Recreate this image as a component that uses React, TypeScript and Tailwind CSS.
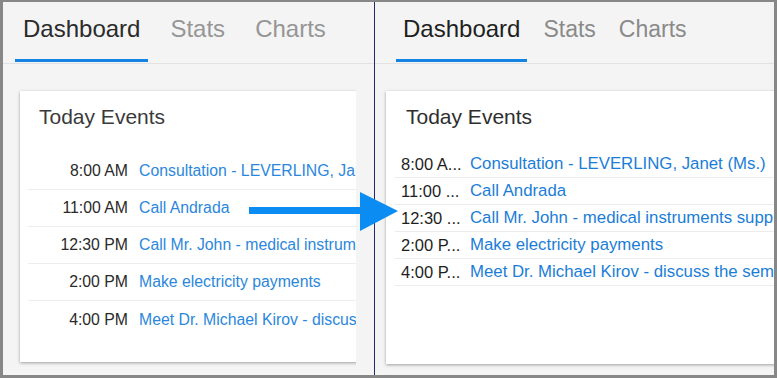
import React from "react";

const events = [
  { time: "8:00 AM", short: "8:00 A...", title: "Consultation - LEVERLING, Janet (Ms.)" },
  { time: "11:00 AM", short: "11:00 ...", title: "Call Andrada" },
  { time: "12:30 PM", short: "12:30 ...", title: "Call Mr. John - medical instruments supplies" },
  { time: "2:00 PM", short: "2:00 P...", title: "Make electricity payments" },
  { time: "4:00 PM", short: "4:00 P...", title: "Meet Dr. Michael Kirov - discuss the seminar" },
];

const OldPanel: React.FC = () => (
  <div className="flex h-full w-[371px] flex-col bg-[#f4f4f4]">
    <div className="flex gap-[14px] border-b border-[#e2e2e2] pb-px pl-[12px]">
      <div className="h-[60px] border-b-[3px] border-[#1583e3] px-2 pt-[15px] text-[24px] leading-none text-[#2b2b2b]">
        Dashboard
      </div>
      <div className="h-[60px] border-b-[3px] border-transparent px-2 pt-[15px] text-[24px] leading-none text-[#969696]">
        Stats
      </div>
      <div className="h-[60px] border-b-[3px] border-transparent px-2 pt-[15px] text-[24px] leading-none text-[#969696]">
        Charts
      </div>
    </div>
    <div className="flex-1 overflow-hidden pr-[18px]">
      <div className="h-full overflow-hidden pl-[17px] pt-[27px]">
        <div className="h-[271px] w-[380px] bg-white shadow-[0_1px_3px_rgba(0,0,0,0.35)]">
          <div className="pl-[19px] pt-[15px] text-[21px] leading-none text-[#3a3a3a]">Today Events</div>
          <div className="ml-[8px] mt-[26px]">
            {events.map((e, i) => (
              <div
                key={i}
                className={`flex h-[37px] items-center whitespace-nowrap text-[15.8px] ${
                  i < events.length - 1 ? "border-b border-[#ededed]" : ""
                }`}
              >
                <span className="w-[100px] shrink-0 text-right text-[#2a2a2a]">{e.time}</span>
                <span className="pl-[11px] text-[#2b87dd]">{e.title}</span>
              </div>
            ))}
          </div>
        </div>
      </div>
    </div>
  </div>
);

const NewPanel: React.FC = () => (
  <div className="flex h-full flex-1 flex-col overflow-hidden bg-[#f4f4f4]">
    <div className="flex gap-[9px] border-b border-[#e2e2e2] pb-px pl-[21px]">
      <div className="h-[60px] border-b-[3px] border-[#1583e3] px-[7px] pt-[15px] text-[24px] leading-none text-[#1f1f1f]">
        Dashboard
      </div>
      <div className="h-[60px] border-b-[3px] border-transparent px-[7px] pt-[16px] text-[23px] leading-none text-[#8a8a8a]">
        Stats
      </div>
      <div className="h-[60px] border-b-[3px] border-transparent px-[7px] pt-[16px] text-[23px] leading-none text-[#8a8a8a]">
        Charts
      </div>
    </div>
    <div className="flex-1 overflow-hidden pl-[11px] pt-[27px]">
      <div className="h-[273px] w-[430px] bg-white shadow-[0_1px_3px_rgba(0,0,0,0.35)]">
        <div className="pl-[20px] pt-[15px] text-[21px] leading-none text-[#2e2e2e]">Today Events</div>
        <div className="ml-[9px] mt-[24px]">
          {events.map((e, i) => (
            <div
              key={i}
              className="flex h-[27px] items-center whitespace-nowrap border-b border-[#ececec] text-[16.5px]"
            >
              <span className="w-[75px] shrink-0 pl-[6px] text-[#1e1e1e]">{e.short}</span>
              <span className="text-[16.8px] text-[#1a7dd8]">{e.title}</span>
            </div>
          ))}
        </div>
      </div>
    </div>
  </div>
);

export default function App() {
  return (
    <div className="relative h-[378px] w-[777px] overflow-hidden border-b-[3px] border-l-[3px] border-r-[3px] border-t-2 border-[#878787] font-['Liberation_Sans',Arial,sans-serif]">
      <div className="flex h-full">
        <OldPanel />
        <div className="w-px shrink-0 bg-[#1f2d6b]" />
        <NewPanel />
      </div>
      <svg
        className="pointer-events-none absolute -left-[3px] -top-[2px]"
        width="777"
        height="378"
        viewBox="0 0 777 378"
      >
        <rect x="249" y="207" width="113" height="7" fill="#0b8cf2" />
        <polygon points="360,192 398,211 360,231" fill="#0b8cf2" />
      </svg>
    </div>
  );
}
